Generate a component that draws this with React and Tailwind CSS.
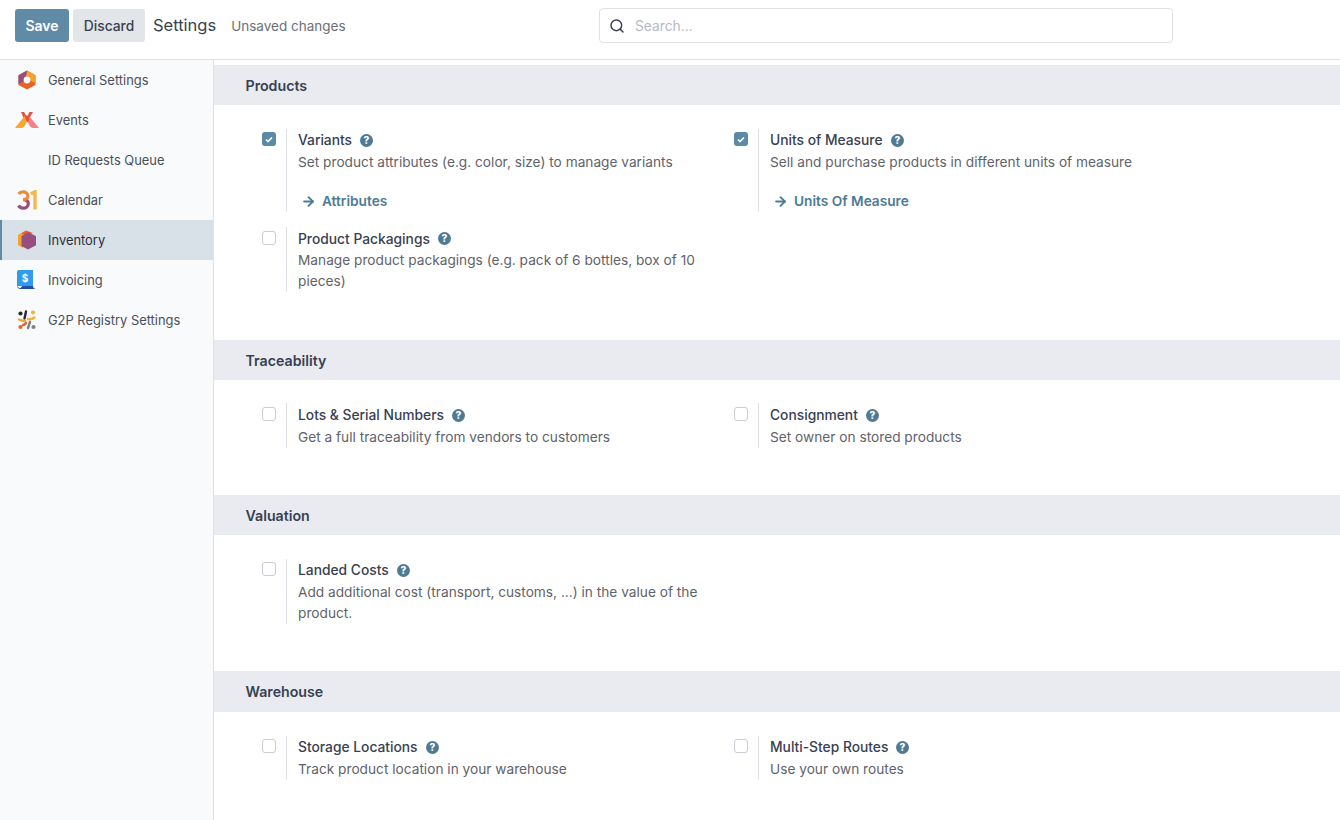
import { Search, ArrowRight } from 'lucide-react';

const HexIcon = () => (
  <svg width="20" height="20" viewBox="0 0 20 20" className="shrink-0">
    <path d="M10 .5 18.500 5.200V15L10 19.500 1.500 15V5.200z" fill="#e8622c" />
    <path d="M10 .5 18.500 5.200V13L13 10.500 9 6z" fill="#f5a12e" />
    <path d="M10 .5 1.500 5.200V14.500L7 11 9 6z" fill="#96507f" />
    <circle cx="10" cy="10" r="3.400" fill="#f9fafc" />
  </svg>
);

const EventsIcon = () => (
  <svg width="24" height="18" viewBox="0 0 24 18" className="shrink-0">
    <path d="M6 1h3l3 5 2.500-5H18l-4 7-2 3-3-3z" fill="#e8503f" />
    <path d="M9.500 5 0 17h6.500c2.500 0 5-4.500 6-8z" fill="#f9a72e" />
    <path d="M12 8c1 4 3 9 6 9h6L15 6z" fill="#f4828a" />
    <path d="M10 6.500 12 4l2.500 4-2 3.500z" fill="#e8503f" />
  </svg>
);

const CalendarIcon = () => (
  <svg width="21" height="20" viewBox="0 0 21 20" fill="none" className="shrink-0">
    <path d="M1.500 15.500c1 2 3 2.600 4.500 2.600 3 0 5.300-1.700 5.300-4.400 0-2.800-2.300-4.100-5-4.100" stroke="#96507f" strokeWidth="3.200" />
    <path d="M6.300 9.600c2.500 0 4.500-1.200 4.500-3.800 0-2.500-2.200-3.900-4.800-3.900-1.700 0-3.300.7-4.300 2.100" stroke="#f0893c" strokeWidth="3.200" />
    <path d="M13.800 4 18 1.800V19.500" stroke="#f7b84a" strokeWidth="3.400" />
  </svg>
);

const InventoryIcon = () => (
  <svg width="20" height="20" viewBox="0 0 20 20" className="shrink-0">
    <path d="M9 .5 1 5v10l5 3 4-14z" fill="#f5a12e" />
    <path d="M9 .5 4 3.500l5 2 7-2.500z" fill="#e8622c" />
    <path d="M11 2 19 6.200v9L11 19.500 4.500 16V6.200z" fill="#96507f" />
  </svg>
);

const InvoicingIcon = () => (
  <svg width="20" height="20" viewBox="0 0 20 20" className="shrink-0">
    <path d="M0 2a2 2 0 0 1 2-2h14v16H0z" fill="#2f9bf0" />
    <path d="M0 15c0 2.500 1.500 4 3.500 4H19c-1.500 0-3-1-3-3H5.500C4.500 16 4.500 18 3 18c-1.500 0-3-1.500-3-3z" fill="#1f4fa8" />
    <text x="8" y="12" textAnchor="middle" fontSize="10" fontWeight="700" fill="#ffffff" fontFamily="Inter, sans-serif">$</text>
  </svg>
);

const RegistryIcon = () => (
  <svg width="20" height="20" viewBox="0 0 20 20" className="shrink-0">
    <circle cx="3.500" cy="3.500" r="2.100" fill="#2a2a2e" />
    <circle cx="16" cy="2.500" r="2.100" fill="#f5b13e" />
    <circle cx="3.500" cy="17" r="2.100" fill="#e8622c" />
    <circle cx="16.500" cy="17" r="2.100" fill="#7f7f86" />
    <path d="M9 1.500 7.500 8.500" stroke="#2a2a2e" strokeWidth="2.400" strokeLinecap="round" />
    <path d="M17.500 7.500C15 9.500 13 9.500 11 9" stroke="#f5b13e" strokeWidth="2.400" strokeLinecap="round" />
    <path d="M2 9.500C4 10.500 6 11 8 11" stroke="#f5a12e" strokeWidth="2.400" strokeLinecap="round" />
    <path d="M9 13C8 14.500 7 15 6 15" stroke="#e8622c" strokeWidth="2.400" strokeLinecap="round" />
    <path d="M11 18 13 12" stroke="#7f7f86" strokeWidth="2.400" strokeLinecap="round" />
  </svg>
);

const apps = [
  { label: 'General Settings', icon: <HexIcon /> },
  { label: 'Events', icon: <EventsIcon /> },
  { label: 'ID Requests Queue', icon: null },
  { label: 'Calendar', icon: <CalendarIcon /> },
  { label: 'Inventory', icon: <InventoryIcon />, active: true },
  { label: 'Invoicing', icon: <InvoicingIcon /> },
  { label: 'G2P Registry Settings', icon: <RegistryIcon /> },
];

const sections = [
  {
    title: 'Products',
    settings: [
      { title: 'Variants', text: 'Set product attributes (e.g. color, size) to manage variants', checked: true, link: 'Attributes' },
      { title: 'Units of Measure', text: 'Sell and purchase products in different units of measure', checked: true, link: 'Units Of Measure' },
      { title: 'Product Packagings', text: 'Manage product packagings (e.g. pack of 6 bottles, box of 10 pieces)' },
    ],
  },
  {
    title: 'Traceability',
    settings: [
      { title: 'Lots & Serial Numbers', text: 'Get a full traceability from vendors to customers' },
      { title: 'Consignment', text: 'Set owner on stored products' },
    ],
  },
  {
    title: 'Valuation',
    settings: [
      { title: 'Landed Costs', text: 'Add additional cost (transport, customs, ...) in the value of the product.' },
    ],
  },
  {
    title: 'Warehouse',
    tall: true,
    settings: [
      { title: 'Storage Locations', text: 'Track product location in your warehouse' },
      { title: 'Multi-Step Routes', text: 'Use your own routes' },
    ],
  },
];

const HelpIcon = () => (
  <svg width="13" height="13" viewBox="0 0 13 13" className="shrink-0">
    <circle cx="6.500" cy="6.500" r="6.500" fill="#4f7a94" />
    <text x="6.500" y="10" textAnchor="middle" fontSize="10" fontWeight="800" fill="#ffffff" fontFamily="Inter, sans-serif">?</text>
  </svg>
);

const Checkbox = ({ checked }) =>
  checked ? (
    <span className="flex h-[14px] w-[14px] items-center justify-center rounded-[3px] bg-[#5a8aa6]">
      <svg width="8" height="7" viewBox="0 0 8 7" fill="none">
        <path d="M1 3.500 3 5.500 7 1.500" stroke="#ffffff" strokeWidth="1.600" />
      </svg>
    </span>
  ) : (
    <span className="block h-[14px] w-[14px] rounded-[3px] border border-[#c9cdd3] bg-white" />
  );

const Setting = ({ title, text, checked, link }) => (
  <div className="flex w-[472px]">
    <div className="w-[40px] shrink-0 pl-4 pt-[3.500px]">
      <Checkbox checked={checked} />
    </div>
    <div className="w-[424px] border-l border-[#dee2e6] pl-[11px]">
      <div className="flex h-[23.300px] items-center gap-2 pt-[0.500px] text-[13.800px] font-medium text-[#374151]">
        {title}
        <HelpIcon />
      </div>
      <p className="text-[13.700px] leading-[21px] text-[#5f636a]">{text}</p>
      {link && (
        <div className="mt-[17.200px] flex h-[22px] items-center gap-[6px] pl-[3px] text-[13.700px] font-semibold text-[#4f7a94]">
          <ArrowRight size={15} strokeWidth={3} className="shrink-0" />
          {link}
        </div>
      )}
    </div>
  </div>
);

export default function App() {
  return (
    <div className="flex h-[820px] flex-col overflow-hidden bg-white font-['Inter',sans-serif]">
      <header className="relative flex h-[60px] shrink-0 items-center border-b border-[#dee2e6] pb-[8px] pl-[15px]">
        <button className="h-[33px] w-[54px] rounded-[3px] bg-[#5f8ba6] text-[14px] font-semibold text-white">Save</button>
        <button className="ml-1 h-[33px] w-[72px] rounded-[3px] bg-[#e2e5e9] pt-[2px] text-[13.800px] font-medium text-[#374151]">Discard</button>
        <span className="ml-2 text-[16.500px] text-[#374151]">Settings</span>
        <span className="ml-[15px] pt-[2px] text-[13.500px] text-[#6b7078]">Unsaved changes</span>
        <div className="absolute left-[599px] top-[8px] flex h-[35px] w-[574px] items-center rounded-[4px] border border-[#dee2e6] pl-[9px]">
          <Search size={16} strokeWidth={2.200} className="text-[#374151]" />
          <span className="ml-[10px] pt-[2px] text-[13.800px] text-[#b6babf]">Search...</span>
        </div>
      </header>
      <div className="flex min-h-0 flex-1">
        <aside className="w-[214px] shrink-0 border-r border-[#dee2e6] bg-[#f9fafc]">
          {apps.map((app) => (
            <div
              key={app.label}
              className={`flex h-[40px] items-center text-[12.900px] ${
                app.active
                  ? 'border-l-2 border-[#5f8ba6] bg-[#d9e1e8] pl-[15px] text-[#2b3038]'
                  : 'pl-[17px] text-[#4b5058]'
              }`}
            >
              <span className="flex h-[20px] w-[20px] shrink-0 items-center justify-center">{app.icon}</span>
              <span className="ml-[11px] pt-[2px]">{app.label}</span>
            </div>
          ))}
        </aside>
        <main className="min-w-0 flex-1 pt-[4.800px]">
          {sections.map((section) => (
            <section key={section.title}>
              <h2
                className={`flex items-center bg-[#e9ebf0] pl-[31.500px] text-[14.200px] font-semibold text-[#374151] ${
                  section.tall ? 'h-[41px]' : 'h-[40.200px] pt-[2px]'
                }`}
              >
                {section.title}
              </h2>
              <div className="grid grid-cols-[472px_472px] items-start gap-y-[15px] pb-[47.200px] pl-8 pt-[23.600px]">
                {section.settings.map((s) => (
                  <Setting key={s.title} {...s} />
                ))}
              </div>
            </section>
          ))}
        </main>
      </div>
    </div>
  );
}
